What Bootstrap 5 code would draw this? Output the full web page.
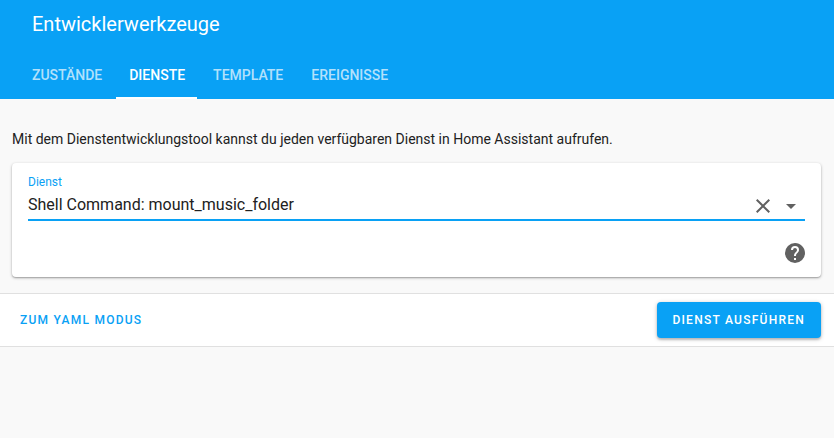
<!DOCTYPE html>
<html lang="de">

<head>
    <meta charset="UTF-8">
    <meta name="viewport" content="width=device-width, initial-scale=1.0">
    <title>Entwicklerwerkzeuge</title>

    <link href="https://cdn.jsdelivr.net/npm/bootstrap@5.3.0/dist/css/bootstrap.min.css" rel="stylesheet">
    <script src="https://cdn.jsdelivr.net/npm/bootstrap@5.3.0/dist/js/bootstrap.bundle.min.js"></script>

    <style>
        html, body {
            height: 100%;
            overflow: hidden;
        }

        body {
            background: #f9f9f9;
            color: #212121;
            font-family: Roboto, "Liberation Sans", sans-serif;
        }

        .app-header {
            background: #09a1f5;
            height: 99px;
            color: #fff;
        }

        .app-title {
            height: 48px;
            padding: 9px 0 0 32px;
            font-size: 20px;
            line-height: 30px;
        }

        .app-tabs {
            height: 48px;
            margin-top: 3px;
            padding-left: 19px;
            gap: 2px;
        }

        .app-tab {
            padding: 0 13px;
            height: 48px;
            line-height: 48px;
            font-size: 14px;
            font-weight: 500;
            color: rgba(255, 255, 255, 0.7);
            text-decoration: none;
            text-transform: uppercase;
        }

        .app-tab:first-child {
            margin-right: -1px;
        }

        .app-tab.is-active {
            color: #fff;
            border-bottom: 2px solid #fff;
            padding-right: 12px;
            margin-right: 1px;
        }

        .intro-text {
            padding: 30px 12px 0;
            font-size: 14px;
            line-height: 20px;
        }

        .service-card {
            margin: 14px 13px 0 12px;
            height: 114px;
            border-radius: 4px;
            background: #fff;
            box-shadow: 0 1px 1px rgba(0, 0, 0, .14), 0 1px 3px rgba(0, 0, 0, .3);
            padding: 0 16px;
        }

        .service-field {
            height: 58px;
            border-bottom: 2px solid #09a1f5;
            padding-top: 12px;
        }

        .service-label {
            font-size: 12px;
            line-height: 14px;
            color: #09a1f5;
        }

        .service-value {
            font-size: 16px;
            line-height: 24px;
            margin-top: 4px;
        }

        .field-icons {
            gap: 4px;
            margin: 0 2px 1px 0;
        }

        .help-row {
            padding-top: 20px;
            margin-right: -2px;
        }

        .action-bar {
            margin-top: 16px;
            height: 54px;
            background: #fff;
            border-top: 1px solid #e0e0e0;
            border-bottom: 1px solid #e0e0e0;
            padding: 0 13px 0 20px;
        }

        .yaml-link {
            color: #09a1f5;
            font-size: 12px;
            font-weight: 500;
            letter-spacing: 1.25px;
            text-decoration: none;
        }

        .run-btn {
            height: 36px;
            padding: 0 16px 0 15px;
            background: #09a1f5;
            color: #fff;
            border: none;
            border-radius: 4px;
            font-size: 12px;
            font-weight: 500;
            letter-spacing: 1.25px;
            box-shadow: 0 2px 2px rgba(0, 0, 0, .14), 0 1px 4px rgba(0, 0, 0, .25);
        }
    </style>
</head>

<body>
    <div class="app-header">
        <div class="app-title">Entwicklerwerkzeuge</div>
        <nav class="app-tabs d-flex">
            <a class="app-tab" href="#">Zustände</a>
            <a class="app-tab is-active" href="#">Dienste</a>
            <a class="app-tab" href="#">Template</a>
            <a class="app-tab" href="#">Ereignisse</a>
        </nav>
    </div>

    <p class="intro-text mb-0">Mit dem Dienstentwicklungstool kannst du jeden verfügbaren Dienst in Home Assistant aufrufen.</p>

    <div class="service-card">
        <div class="service-field d-flex justify-content-between">
            <div>
                <div class="service-label">Dienst</div>
                <div class="service-value">Shell Command: mount_music_folder</div>
            </div>
            <div class="field-icons d-flex align-items-end">
                <svg width="24" height="24" viewBox="0 0 24 24" fill="#616161">
                    <path d="M19,6.41L17.59,5L12,10.59L6.41,5L5,6.41L10.59,12L5,17.59L6.41,19L12,13.41L17.59,19L19,17.59L13.41,12L19,6.41Z" />
                </svg>
                <svg width="24" height="24" viewBox="0 0 24 24" fill="#616161">
                    <path d="M7,10L12,15L17,10H7Z" />
                </svg>
            </div>
        </div>
        <div class="help-row d-flex justify-content-end">
            <svg width="24" height="24" viewBox="0 0 24 24" fill="#616161">
                <path d="M15.07,11.25L14.17,12.17C13.45,12.89 13,13.5 13,15H11V14.5C11,13.39 11.45,12.39 12.17,11.67L13.41,10.41C13.78,10.05 14,9.55 14,9C14,7.89 13.1,7 12,7A2,2 0 0,0 10,9H8A4,4 0 0,1 12,5A4,4 0 0,1 16,9C16,9.88 15.64,10.67 15.07,11.25M13,19H11V17H13M12,2A10,10 0 0,0 2,12A10,10 0 0,0 12,22A10,10 0 0,0 22,12C22,6.47 17.5,2 12,2Z" />
            </svg>
        </div>
    </div>

    <div class="action-bar d-flex justify-content-between align-items-center">
        <a class="yaml-link" href="#">ZUM YAML MODUS</a>
        <button type="button" class="run-btn">DIENST AUSFÜHREN</button>
    </div>
</body>

</html>
